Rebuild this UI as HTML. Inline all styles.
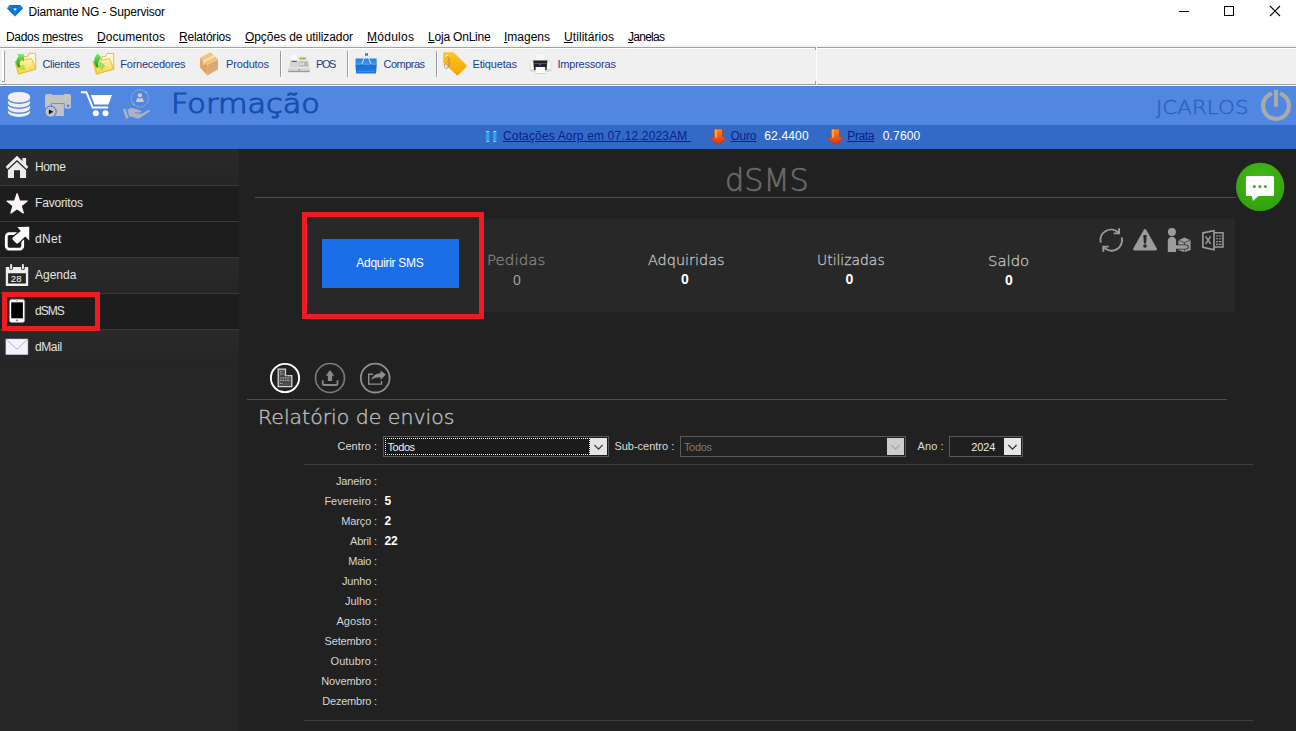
<!DOCTYPE html>
<html lang="pt"><head><meta charset="utf-8"><title>Diamante NG - Supervisor</title>
<style>
*{box-sizing:border-box;margin:0;padding:0}
html,body{width:1296px;height:731px;overflow:hidden;background:#212121;font-family:"Liberation Sans",sans-serif}
body{position:relative}
div,svg{position:absolute}
.t{position:absolute;line-height:1;white-space:nowrap}
u{text-decoration:underline}
.hl{height:1px;background:#4e4e4e}
</style></head><body>
<!-- window chrome -->
<div style="left:0;top:0;width:1296px;height:47px;background:#fff"></div>
<div style="left:0;top:45px;width:1296px;height:2px;background:#f6f6f6"></div>
<div style="left:0;top:47px;width:1296px;height:39px;background:#f0f0f0"></div>
<div style="left:0;top:47px;width:815px;height:1px;background:#a0a0a0"></div>
<div style="left:0;top:48px;width:815px;height:1px;background:#fff"></div>
<div style="left:817px;top:47px;width:479px;height:1px;background:#a0a0a0"></div>
<div style="left:817px;top:48px;width:479px;height:1px;background:#fff"></div>
<div style="left:0;top:84px;width:815px;height:1px;background:#a0a0a0"></div>
<div style="left:817px;top:84px;width:479px;height:1px;background:#a0a0a0"></div>
<div style="left:0;top:85px;width:1296px;height:1px;background:#fff"></div>
<div style="left:815px;top:47px;width:1px;height:3px;background:#a0a0a0"></div>
<div style="left:815px;top:81px;width:1px;height:4px;background:#a0a0a0"></div>
<div style="left:816px;top:47px;width:1px;height:38px;background:#fff"></div>
<!-- toolbar grip + separators -->
<div style="left:2px;top:51px;width:2px;height:30px;background:#fff"></div>
<div style="left:4px;top:51px;width:1px;height:31px;background:#a0a0a0"></div>
<div style="left:2px;top:81px;width:3px;height:1px;background:#a0a0a0"></div>
<div style="left:280px;top:51px;width:1px;height:26px;background:#a0a0a0"></div>
<div style="left:281px;top:51px;width:1px;height:26px;background:#fff"></div>
<div style="left:347px;top:51px;width:1px;height:26px;background:#a0a0a0"></div>
<div style="left:348px;top:51px;width:1px;height:26px;background:#fff"></div>
<div style="left:436px;top:51px;width:1px;height:26px;background:#a0a0a0"></div>
<div style="left:437px;top:51px;width:1px;height:26px;background:#fff"></div>
<!-- blue header -->
<div style="left:0;top:86px;width:1296px;height:39px;background:#5186e1"></div>
<div style="left:0;top:125px;width:1296px;height:24px;background:#346ac7"></div>
<!-- sidebar -->
<div style="left:0;top:149px;width:239px;height:582px;background:#262626"></div>
<div style="left:0;top:149px;width:239px;height:36px;background:linear-gradient(#2a2a2a,#252525)"></div>
<div style="left:0;top:186px;width:239px;height:71px;background:#1d1d1d"></div>
<div style="left:0;top:258px;width:239px;height:35px;background:linear-gradient(#2a2a2a,#252525)"></div>
<div style="left:0;top:294px;width:239px;height:35px;background:#1d1d1d"></div>
<div style="left:0;top:330px;width:239px;height:36px;background:linear-gradient(#2a2a2a,#252525)"></div>
<div style="left:0;top:185px;width:239px;height:1px;background:#3a3a3a"></div>
<div style="left:0;top:221px;width:239px;height:1px;background:#3a3a3a"></div>
<div style="left:0;top:257px;width:239px;height:1px;background:#3a3a3a"></div>
<div style="left:0;top:293px;width:239px;height:1px;background:#3a3a3a"></div>
<div style="left:0;top:329px;width:239px;height:1px;background:#3a3a3a"></div>
<!-- red highlight sidebar -->
<div style="left:2px;top:292px;width:98px;height:39px;border:5px solid #ed1c24"></div>
<!-- main -->
<div class="hl" style="left:255px;top:197px;width:981px"></div>
<div style="left:304px;top:219px;width:931px;height:93px;background:#282828"></div>
<div style="left:302px;top:212px;width:182px;height:107px;border:5px solid #ed1c24;background:#282828"></div>
<div style="left:322px;top:239px;width:137px;height:49px;background:#1a6fe8"></div>
<div class="hl" style="left:247px;top:399px;width:980px"></div>
<div style="left:304px;top:464px;width:949px;height:1px;background:#3e3e3e"></div>
<div style="left:304px;top:720px;width:949px;height:1px;background:#3e3e3e"></div>
<!-- combos -->
<div style="left:383px;top:436px;width:226px;height:21px;border:1px solid #5a5a5a;background:#1b1b1b"></div>
<div style="left:385px;top:438px;width:205px;height:17px;border:1px dotted #fff"></div>
<div style="left:590px;top:438px;width:17px;height:17px;background:#e4e4e4"></div>
<div style="left:680px;top:436px;width:226px;height:21px;border:1px solid #5a5a5a"></div>
<div style="left:887px;top:438px;width:17px;height:17px;background:#cccccc"></div>
<div style="left:949px;top:436px;width:74px;height:21px;border:1px solid #5a5a5a;background:#1f1f1f"></div>
<div style="left:1004px;top:438px;width:17px;height:17px;background:#e6e6e6"></div>
<svg width="1296" height="731" viewBox="0 0 1296 731" style="left:0;top:0">
<defs>
<linearGradient id="gFold" x1="0" y1="0" x2="0" y2="1"><stop offset="0" stop-color="#fff6b8"/><stop offset="1" stop-color="#fdd12c"/></linearGradient>
<linearGradient id="gFoldB" x1="0" y1="0" x2="0" y2="1"><stop offset="0" stop-color="#fffce0"/><stop offset="1" stop-color="#fdeb9a"/></linearGradient>
<linearGradient id="gGreen" x1="0" y1="0" x2="0" y2="1"><stop offset="0" stop-color="#7df06a"/><stop offset="1" stop-color="#0e9a1a"/></linearGradient>
<linearGradient id="gTag" x1="0" y1="0" x2="0" y2="1"><stop offset="0" stop-color="#fdc423"/><stop offset="1" stop-color="#f4a400"/></linearGradient>
<linearGradient id="gBask" x1="0" y1="0" x2="0" y2="1"><stop offset="0" stop-color="#1f7fe6"/><stop offset="0.4" stop-color="#3d9cf2"/><stop offset="0.45" stop-color="#1a6fd6"/><stop offset="1" stop-color="#1e7ae2"/></linearGradient>
<linearGradient id="gArr" x1="0" y1="0" x2="0" y2="1"><stop offset="0" stop-color="#ff8a1e"/><stop offset="1" stop-color="#e02a08"/></linearGradient>
<radialGradient id="gChat" cx="0.5" cy="0.35" r="0.7"><stop offset="0" stop-color="#43bc16"/><stop offset="1" stop-color="#319e0f"/></radialGradient>
<linearGradient id="gPos" x1="0" y1="0" x2="0" y2="1"><stop offset="0" stop-color="#e8e8e8"/><stop offset="1" stop-color="#bdbdbd"/></linearGradient>
</defs>
<!-- app diamond -->
<g>
<polygon points="9.8,5 20.2,5 23,8.6 15,16.4 7,8.6" fill="#0b6fce"/>
<polygon points="9.8,5 12.5,8.6 7,8.6" fill="#1088e0"/>
<polygon points="20.2,5 23,8.6 17.5,8.6" fill="#1088e0"/>
<polygon points="12.5,8.6 17.5,8.6 15,16.4" fill="#0d84dc"/>
<polygon points="13.6,8.4 16.6,8.4 15.8,10.2 14.4,10.2" fill="#fff"/>
</g>
<!-- folder template -->
<g>
<path d="M24.2 56.6 L27.6 56.6 L29 53.4 L35.6 53.4 L35.8 69 L20 73 Z" fill="url(#gFoldB)" stroke="#d9a94a" stroke-width="0.8"/>
<path d="M18.8 61 L31.5 58.6 L35.6 69.2 L18.4 74.2 L15 61.5 Z" fill="url(#gFold)" stroke="#e0ac3a" stroke-width="0.8"/>
<path d="M18.8 61 L18.4 74.2 L15 61.5 Z" fill="#f3c030"/>
</g>
<path d="M18.6 67.6 C15.4 64 15.6 59 18.8 56.4 L17 54 L24 54.2 L24 61.6 L21.8 59.2 C19.6 61 19 64.4 20.4 67.2 Z" fill="url(#gGreen)"/>
<path d="M20.4 65 L24 65 L26 69.5 L20 70 Z" fill="#9fdc55" opacity="0.75"/>
<g transform="translate(78 0)">
<path d="M24.2 56.6 L27.6 56.6 L29 53.4 L35.6 53.4 L35.8 69 L20 73 Z" fill="url(#gFoldB)" stroke="#d9a94a" stroke-width="0.8"/>
<path d="M18.8 61 L31.5 58.6 L35.6 69.2 L18.4 74.2 L15 61.5 Z" fill="url(#gFold)" stroke="#e0ac3a" stroke-width="0.8"/>
<path d="M18.8 61 L18.4 74.2 L15 61.5 Z" fill="#f3c030"/>
</g>
<path d="M96.8 67.6 C93.2 64 93.4 57.4 97.6 53.6 C99.6 54.8 100.6 56.4 101 58.2 C98.4 59.6 97.6 63.6 98.6 67.4 Z" fill="url(#gGreen)"/>
<path d="M99.5 61 L105.5 65.4 L101.5 71 L100.8 68 L98.6 68.6 L98.6 62.8 Z" fill="#8fd855" opacity="0.8"/>
<!-- box -->
<polygon points="210.4,52.2 218,59.6 207.1,65.1 200.1,57.8" fill="#f3c474"/>
<polygon points="200.1,57.8 207.1,65.1 207.3,75.4 200.1,67.5" fill="#e2a35c"/>
<polygon points="207.1,65.1 218,59.6 218,69.4 207.3,75.4" fill="#d9ab74"/>
<polygon points="213.5,55.2 215,56.7 204.4,62.3 204.4,65.6 203,64.2 203,60.8" fill="#f4e0c4"/>
<!-- POS -->
<rect x="288" y="67.4" width="22" height="4.6" rx="1" fill="url(#gPos)"/>
<rect x="288.4" y="71" width="21.2" height="1.2" fill="#9a9a9a"/>
<path d="M290.4 61 L308.4 61 L309.4 67.4 L289.2 67.4 Z" fill="#d4d4d4"/>
<path d="M297.5 56.6 L307.2 56.6 L308.4 61 L297.5 61 Z" fill="#e9e9e9"/>
<rect x="299.2" y="57.4" width="6.8" height="2" rx="0.8" fill="#8fc62a"/>
<rect x="299.5" y="61.6" width="8.4" height="4.6" fill="#b5b5b5"/>
<rect x="300.2" y="62.6" width="1.6" height="2.6" fill="#e8e8e8"/><rect x="302.6" y="62.6" width="1.6" height="2.6" fill="#e8e8e8"/>
<circle cx="294" cy="57.8" r="2.8" fill="#fdfdfd"/>
<rect x="291.6" y="60.8" width="5.2" height="1" fill="#444"/>
<rect x="298.4" y="69.2" width="1.6" height="1.2" fill="#8a8a8a"/>
<!-- basket -->
<path d="M355.6 58.4 L376.6 58.4 L376.8 65 L376 73.6 L356.2 73.6 L355.4 65 Z" fill="url(#gBask)"/>
<rect x="357.6" y="70.8" width="17" height="1" fill="#3f97ee"/>
<path d="M361.6 64.4 L366 54 L367.2 54 L371 64.4" fill="none" stroke="#e8e8ee" stroke-width="0.9"/>
<rect x="365" y="53.2" width="3" height="2.6" fill="#2d82e2"/>
<circle cx="361.6" cy="64.5" r="0.7" fill="#8a5a5a"/><circle cx="370.9" cy="64.5" r="0.7" fill="#8a5a5a"/>
<!-- tag -->
<path d="M443.4 52.2 L453.6 52.2 L466.6 65.2 Q467.3 66 466.6 66.8 L458.2 75 Q457.4 75.6 456.6 75 L443.2 62.6 Z" fill="url(#gTag)"/>
<circle cx="446.8" cy="55.8" r="1.2" fill="#f4f4f4"/>
<path d="M446.8 55.8 C450 58 450.2 66 447.2 68.2 C445 69 444 66.4 444.4 64" fill="none" stroke="#8d8d80" stroke-width="0.9"/>
<!-- printer -->
<rect x="535.2" y="53.8" width="9.8" height="7" fill="#f7f7f7" stroke="#e2e2e2" stroke-width="0.4"/>
<ellipse cx="540.5" cy="70.6" rx="11.5" ry="1.6" fill="#d4d4d4"/><path d="M530.6 62.5 Q530.6 60.8 533 60.8 L548 60.8 Q550.6 60.8 550.8 62.5 L551 69.6 L530.2 69.6 Z" fill="#fbfbfb" stroke="#cfcfcf" stroke-width="0.6"/>
<path d="M533.2 60.6 L547.4 60.6 L546.6 70 L534 70 Z" fill="#232323"/>
<rect x="533.4" y="63.2" width="14" height="0.6" fill="#777"/>
<rect x="539" y="64" width="2.2" height="1.2" fill="#4a5ad8"/>
<rect x="535.6" y="67" width="9.6" height="6.4" fill="#fdfdfd"/>
<rect x="535" y="73" width="10.6" height="0.8" fill="#c8c8c8"/>

<!-- header icons -->
<g fill="#efefef">
<path d="M7.9 96.8 L7.9 112 A11.1 4.9 0 0 0 30.1 112 L30.1 96.8 Z"/>
</g>
<g fill="none" stroke="#5186e1" stroke-width="1.3">
<path d="M7.6 98.6 A11.3 4.6 0 0 0 30.4 98.6"/>
<path d="M7.6 103.6 A11.3 4.6 0 0 0 30.4 103.6"/>
<path d="M7.6 108.6 A11.3 4.6 0 0 0 30.4 108.6"/>
</g>
<ellipse cx="19" cy="96.8" rx="11.1" ry="4.9" fill="#f0f0f0"/>
<!-- printer-play -->
<path d="M47 94 L51.4 94 Q52.4 94 52.4 95 L63.4 95 Q63.4 94 64.4 94 L69 94 Q71 94 71 96 L71 107 Q71 108.6 69.4 108.6 L46.6 108.6 Q45 108.6 45 107 L45 96 Q45 94 47 94 Z" fill="#c3c3c3"/>
<rect x="51.2" y="103.2" width="13.4" height="6" fill="#5186e1"/>
<rect x="52" y="104" width="11.9" height="12" fill="#c3c3c3"/>
<rect x="66.9" y="104.5" width="2.5" height="2.5" rx="0.6" fill="#5186e1"/>
<circle cx="50.6" cy="111.8" r="6.2" fill="#5186e1"/>
<circle cx="50.6" cy="111.8" r="5" fill="#c3c3c3"/>
<path d="M48.9 109.4 L53.4 111.8 L48.9 114.2 Z" fill="#111"/>
<!-- cart -->
<path d="M80.9 92.2 L86.4 92.2 L92.7 107.6 L108.1 107.6" fill="none" stroke="#fff" stroke-width="2" stroke-linejoin="miter"/>
<path d="M90.8 95.1 L112.1 95.1 L108.4 104.5 L94.5 104.5 Z" fill="#fff"/>
<circle cx="95.8" cy="113.2" r="3" fill="#fff"/><circle cx="105.5" cy="113.2" r="3" fill="#fff"/>
<!-- hand + user -->
<circle cx="139.9" cy="98.3" r="8.7" fill="none" stroke="#a9b3cc" stroke-width="0.8" opacity="0.8"/>
<circle cx="146" cy="92.6" r="1" fill="#a9b3cc"/><circle cx="133.8" cy="104.2" r="1" fill="#a9b3cc"/>
<circle cx="139.9" cy="95.3" r="2.1" fill="#d3cdc6"/>
<path d="M136 102 L137 98.6 Q137.3 97.8 138.2 98 L139.9 98.8 L141.6 98 Q142.5 97.8 142.8 98.6 L143.8 102 Z" fill="#d3cdc6"/>
<path d="M122.9 109.1 L125.4 108.5 L128.5 118.1 L126 119 Z" fill="#adb3c2"/>
<path d="M127.2 109.8 Q131 107.4 134 108.4 L140.4 110.6 Q141.6 111.4 140.8 112.4 L134.6 112.6 L134.6 113.2 L141.8 113.8 L148 110.2 Q150 109.6 150.2 111 L139.6 118.2 Q138.4 118.8 137 118.4 L131.4 116.6 L129.6 117 Z" fill="#adb3c2"/>
<!-- power -->
<path d="M1281.5 94.1 A13 13 0 1 1 1270.5 94.1" fill="none" stroke="#aaaaaa" stroke-width="4.2" stroke-linecap="round"/>
<rect x="1273.9" y="89.8" width="4.1" height="17" fill="#aaaaaa"/>
<!-- ticker -->
<rect x="486" y="131" width="3.5" height="11" fill="#2aa6e0"/><rect x="493" y="131" width="3.5" height="11" fill="#2aa6e0"/>
<rect x="486.6" y="131" width="2.3" height="0.9" fill="#c9ecfa"/><rect x="493.6" y="131" width="2.3" height="0.9" fill="#c9ecfa"/>
<rect x="486.6" y="141" width="2.3" height="0.9" fill="#8fd8f5"/><rect x="493.6" y="141" width="2.3" height="0.9" fill="#8fd8f5"/>
<g><path d="M714.2 129 L722.4 129 L722.4 136.2 L725.8 138.4 L719.1 144.9 L710.1 138.4 L714.2 137.6 Z" fill="url(#gArr)" stroke="#b03010" stroke-width="0.5"/>
<path d="M714.8 129.6 L717 129.6 L717 138 L714.8 137.6 Z" fill="#ffb050" opacity="0.8"/></g>
<g transform="translate(117 0)"><path d="M714.2 129 L722.4 129 L722.4 136.2 L725.8 138.4 L719.1 144.9 L710.1 138.4 L714.2 137.6 Z" fill="url(#gArr)" stroke="#b03010" stroke-width="0.5"/>
<path d="M714.8 129.6 L717 129.6 L717 138 L714.8 137.6 Z" fill="#ffb050" opacity="0.8"/></g>
<!-- sidebar icons -->
<g fill="#ececec">
<path d="M17 155.7 L22.4 160.9 L22.4 157.9 L26.1 157.9 L26.1 164.5 L28.3 166.7 L26.6 168.9 L17 159.9 L7.4 168.9 L5.7 166.7 Z"/>
<path d="M17 161.8 L26.1 170.2 L26.1 178 L20 178 L20 170.2 L14 170.2 L14 178 L7.9 178 L7.9 170.2 Z"/>
</g>
<path d="M17.1 193.6 L19.6 200.9 L27.2 201.1 L21.2 205.8 L23.3 213 L17.1 208.7 L10.9 213 L13 205.8 L7 201.1 L14.6 200.9 Z" fill="#fff6f9" stroke="#fff6f9" stroke-width="1.2" stroke-linejoin="round"/>
<!-- dNet -->
<rect x="6.3" y="233.7" width="16.4" height="15.4" rx="3" fill="none" stroke="#fff" stroke-width="2.8"/>
<path d="M17.4 227 L29.2 226.8 L29.2 240.6 L25.2 236.6 L18.4 243 Q17.2 244 16 243 L12.8 239.8 Q11.8 238.6 12.8 237.4 L20.8 231 Z" fill="#fff" stroke="#1d1d1d" stroke-width="2.4" paint-order="stroke"/>
<!-- agenda -->
<path d="M5.8 267 H28.2 V286.1 H5.8 Z M8.1 273.3 V283.6 H25.9 V273.3 Z" fill="#eeeeee" fill-rule="evenodd"/>
<rect x="9.3" y="263.6" width="3.6" height="6.4" rx="1.6" fill="#262626"/><rect x="21.1" y="263.6" width="3.6" height="6.4" rx="1.6" fill="#262626"/>
<rect x="10.1" y="263.9" width="2" height="5.4" rx="0.9" fill="#e6e6e6"/><rect x="21.9" y="263.9" width="2" height="5.4" rx="0.9" fill="#e6e6e6"/>
<!-- phone -->
<rect x="9.4" y="299.2" width="15.3" height="23.4" rx="2.4" fill="#fff" stroke="#8a8a8a" stroke-width="0.7"/>
<rect x="11.2" y="302.3" width="11.7" height="16" fill="#000"/>
<circle cx="17" cy="320.4" r="0.8" fill="#555"/><rect x="15.8" y="300.5" width="2.4" height="0.6" fill="#777"/>
<!-- mail -->
<rect x="5.9" y="339" width="22" height="15.6" fill="#f4f3fd" stroke="#c9c6e4" stroke-width="0.5"/>
<path d="M6.2 339.4 L17 349.2 L27.6 339.4" fill="none" stroke="#a9a8c6" stroke-width="0.9"/>
<!-- chat bubble -->
<circle cx="1260.2" cy="186.9" r="24.2" fill="url(#gChat)"/>
<path d="M1247.4 176.1 H1272.5 Q1274 176.1 1274 177.6 V194.4 Q1274 195.9 1272.5 195.9 H1258.2 L1253 200.9 L1251.8 195.9 H1247.4 Q1245.9 195.9 1245.9 194.4 V177.6 Q1245.9 176.1 1247.4 176.1 Z" fill="#fff"/>
<circle cx="1254.4" cy="186.6" r="1.5" fill="#3aae14"/><circle cx="1259.9" cy="186.6" r="1.5" fill="#3aae14"/><circle cx="1265.4" cy="186.6" r="1.5" fill="#3aae14"/>
<!-- panel icons -->
<g fill="none" stroke="#9c9c9c" stroke-width="1.9">
<path d="M1100.7 242.6 A10.6 10.6 0 0 1 1118.4 232.6"/>
<path d="M1121.8 237.6 A10.6 10.6 0 0 1 1104 247.6"/>
<path d="M1119.1 228.2 V233.4 H1113.7"/>
<path d="M1103.3 251.8 V246.6 H1108.7"/>
</g>
<path d="M1145 230.2 L1155.8 249.2 L1134.3 249.2 Z" fill="#9c9c9c" stroke="#9c9c9c" stroke-width="2.4" stroke-linejoin="round"/>
<path d="M1143.3 235 H1146.7 L1146.1 243.6 H1143.9 Z" fill="#282828"/><circle cx="1145" cy="246" r="1.8" fill="#282828"/>
<g fill="#9c9c9c">
<circle cx="1171.9" cy="232" r="4"/>
<path d="M1167.8 252 V241 A4.15 4.15 0 0 1 1176.1 241 V252 Z"/>
<path d="M1184.4 237.6 L1190.6 240.2 L1190.6 250 L1184.4 252.2 L1178.4 250 L1178.4 240.2 Z"/>
</g>
<path d="M1178.6 240.3 L1184.4 242.6 L1190.4 240.3 M1184.4 242.6 V252" fill="none" stroke="#282828" stroke-width="0.7"/>
<rect x="1176.5" y="244.4" width="12.2" height="5.2" rx="2.4" fill="#282828"/>
<rect x="1174" y="245.3" width="13.8" height="3.4" rx="1.7" fill="#9c9c9c"/>
<!-- excel -->
<rect x="1213" y="232.8" width="10" height="14.2" fill="none" stroke="#9c9c9c" stroke-width="1.5"/>
<path d="M1216 236 H1221.4 M1216 238.8 H1221.4 M1216 241.6 H1221.4 M1216 244.4 H1221.4" stroke="#9c9c9c" stroke-width="1.1"/>
<path d="M1218.6 234 V246" stroke="#282828" stroke-width="0.8"/>
<path d="M1202.9 232.9 L1214 230.7 V249.7 L1202.9 247.3 Z" fill="#282828" stroke="#9c9c9c" stroke-width="1.6" stroke-linejoin="miter"/>
<path d="M1205.6 236.4 L1210.6 243.8 M1210.6 236.4 L1205.6 243.8" stroke="#9c9c9c" stroke-width="1.5"/>
<!-- round icons -->
<circle cx="285" cy="378" r="14.1" fill="none" stroke="#fff" stroke-width="1.9"/>
<path d="M278.2 369.1 H285.5 V375.7 H291.8 V386.6 H278.2 Z" fill="#505050" stroke="#d2d2d2" stroke-width="1.3"/>
<path d="M280 371.6 H282.6 M280 374 H283.4 M280 378 H290 M280 380.4 H290 M280 383.4 H282.8" stroke="#b4b4b4" stroke-width="1" stroke-dasharray="1.6 0.8"/>
<path d="M280 376.2 H289.6 M280 382 H289.6" stroke="#3a3a3a" stroke-width="0.9" stroke-dasharray="2 1"/>
<circle cx="330" cy="378" r="14.5" fill="none" stroke="#7a7a7a" stroke-width="1.7"/>
<path d="M330 370 L334.2 375.7 H332.1 V381 H327.9 V375.7 H325.8 Z" fill="#8a8a8a"/>
<path d="M322.7 380.2 V383.4 Q322.7 385 324.3 385 H335.9 Q337.5 385 337.5 383.4 V380.2" fill="none" stroke="#8a8a8a" stroke-width="1.8"/>
<circle cx="375.2" cy="378.1" r="14.4" fill="none" stroke="#8e8e8e" stroke-width="1.8"/>
<path d="M373 374.3 H368.7 V384.1 H381.5 V381" fill="none" stroke="#8e8e8e" stroke-width="1.4"/>
<path d="M371 380 Q373.4 373.4 380.6 373.2 V370.4 L385.8 374.6 L380.6 380 V377.4 Q375 376.8 371 380 Z" fill="#8e8e8e"/>
<!-- chevrons -->
<path d="M594.4 445 L598.5 449.2 L602.6 445" fill="none" stroke="#404040" stroke-width="1.2"/>
<path d="M891.4 445 L895.5 449.2 L899.6 445" fill="none" stroke="#a8a8a8" stroke-width="1.2"/>
<path d="M1008.4 445 L1012.5 449.2 L1016.6 445" fill="none" stroke="#303030" stroke-width="1.2"/>
<!-- window controls -->
<path d="M1179 11.5 H1189" stroke="#000" stroke-width="1"/>
<rect x="1224.5" y="6.5" width="9" height="9" fill="none" stroke="#000" stroke-width="1"/>
<path d="M1270 6 L1280 16 M1280 6 L1270 16" stroke="#000" stroke-width="1.1"/>
</svg>

<span class="t" style='left:28.5px;top:5.8px;font-size:12px;color:#000;letter-spacing:-0.18px;'>Diamante NG - Supervisor</span>
<span class="t" style='left:6.0px;top:30.8px;font-size:12px;color:#000;letter-spacing:-0.31px;'>Dados <u>m</u>estres</span>
<span class="t" style='left:97.0px;top:30.8px;font-size:12px;color:#000;letter-spacing:0.07px;'><u>D</u>ocumentos</span>
<span class="t" style='left:179.0px;top:30.8px;font-size:12px;color:#000;letter-spacing:-0.22px;'><u>R</u>elatórios</span>
<span class="t" style='left:245.0px;top:30.8px;font-size:12px;color:#000;letter-spacing:-0.07px;'><u>O</u>pções de utilizador</span>
<span class="t" style='left:367.0px;top:30.8px;font-size:12px;color:#000;letter-spacing:0.27px;'><u>M</u>ódulos</span>
<span class="t" style='left:428.0px;top:30.8px;font-size:12px;color:#000;letter-spacing:-0.2px;'><u>L</u>oja OnLine</span>
<span class="t" style='left:504.0px;top:30.8px;font-size:12px;color:#000;'><u>I</u>magens</span>
<span class="t" style='left:564.0px;top:30.8px;font-size:12px;color:#000;letter-spacing:0.07px;'><u>U</u>tilitários</span>
<span class="t" style='left:628.0px;top:30.8px;font-size:12px;color:#000;letter-spacing:-0.73px;'><u>J</u>anelas</span>
<span class="t" style='left:42.5px;top:58.7px;font-size:11px;color:#1e3c8a;letter-spacing:-0.32px;'>Clientes</span>
<span class="t" style='left:120.3px;top:58.7px;font-size:11px;color:#1e3c8a;letter-spacing:-0.24px;'>Fornecedores</span>
<span class="t" style='left:226.0px;top:58.7px;font-size:11px;color:#1e3c8a;letter-spacing:-0.15px;'>Produtos</span>
<span class="t" style='left:316.0px;top:58.7px;font-size:11px;color:#1e3c8a;letter-spacing:-1.45px;'>POS</span>
<span class="t" style='left:383.5px;top:58.7px;font-size:11px;color:#1e3c8a;letter-spacing:-0.52px;'>Compras</span>
<span class="t" style='left:472.5px;top:58.7px;font-size:11px;color:#1e3c8a;letter-spacing:-0.17px;'>Etiquetas</span>
<span class="t" style='left:557.4px;top:58.7px;font-size:11px;color:#1e3c8a;letter-spacing:-0.2px;'>Impressoras</span>
<span class="t" style='left:170.8px;top:91.4px;font-size:26.5px;color:#154eb0;font-family:"DejaVu Sans","Liberation Sans",sans-serif;font-weight:200;transform-origin:0 0;transform:scaleX(1.145);-webkit-text-stroke:1.01px #154eb0;'>Formação</span>
<span class="t" style='left:1156.0px;top:97.8px;font-size:19.5px;color:#2a62c4;font-family:"DejaVu Sans","Liberation Sans",sans-serif;font-weight:200;transform-origin:0 0;transform:scaleX(1.099);-webkit-text-stroke:0.39px #2a62c4;'>JCARLOS</span>
<span class="t" style='left:503.0px;top:129.8px;font-size:12px;color:#0a1e8c;letter-spacing:0.15px;text-decoration:underline;'>Cotações Aorp em 07.12.2023AM&nbsp;</span>
<span class="t" style='left:730.5px;top:129.8px;font-size:12px;color:#0a1e8c;letter-spacing:-0.23px;text-decoration:underline;'>Ouro</span>
<span class="t" style='left:764.2px;top:129.8px;font-size:12px;color:#fff;letter-spacing:0.18px;'>62.4400</span>
<span class="t" style='left:847.3px;top:129.8px;font-size:12px;color:#0a1e8c;letter-spacing:-0.38px;text-decoration:underline;'>Prata</span>
<span class="t" style='left:882.8px;top:129.8px;font-size:12px;color:#fff;letter-spacing:0.15px;'>0.7600</span>
<span class="t" style='left:35.0px;top:160.8px;font-size:12px;color:#e4e4e4;letter-spacing:-0.38px;'>Home</span>
<span class="t" style='left:35.0px;top:196.8px;font-size:12px;color:#e4e4e4;letter-spacing:-0.17px;'>Favoritos</span>
<span class="t" style='left:35.0px;top:232.8px;font-size:12px;color:#e4e4e4;letter-spacing:0.33px;'>dNet</span>
<span class="t" style='left:35.0px;top:268.8px;font-size:12px;color:#e4e4e4;'>Agenda</span>
<span class="t" style='left:35.0px;top:304.8px;font-size:12px;color:#e4e4e4;letter-spacing:-0.99px;'>dSMS</span>
<span class="t" style='left:35.0px;top:340.8px;font-size:12px;color:#e4e4e4;letter-spacing:-0.4px;'>dMail</span>
<span class="t" style='left:10.8px;top:274.2px;font-size:9.5px;color:#fff;letter-spacing:0.12px;'>28</span>
<span class="t" style='left:725.3px;top:163.9px;font-size:32px;color:#6a6a6a;font-family:"DejaVu Sans","Liberation Sans",sans-serif;font-weight:200;transform-origin:0 0;transform:scaleX(0.947);-webkit-text-stroke:0.64px #6a6a6a;'>dSMS</span>
<span class="t" style='left:356.3px;top:256.5px;font-size:12px;color:#fff;letter-spacing:-0.29px;'>Adquirir SMS</span>
<span class="t" style='left:487.2px;top:252.5px;font-size:14.2px;color:#858585;font-family:"DejaVu Sans","Liberation Sans",sans-serif;font-weight:200;transform-origin:0 0;transform:scaleX(1.065);-webkit-text-stroke:0.28px #858585;'>Pedidas</span>
<span class="t" style='left:513.0px;top:272.9px;font-size:14px;color:#a0a0a0;'>0</span>
<span class="t" style='left:647.7px;top:252.5px;font-size:14.2px;color:#c4c4c4;font-family:"DejaVu Sans","Liberation Sans",sans-serif;font-weight:200;transform-origin:0 0;transform:scaleX(1.016);-webkit-text-stroke:0.28px #c4c4c4;'>Adquiridas</span>
<span class="t" style='left:681.0px;top:272.1px;font-size:14px;color:#fff;font-weight:700;'>0</span>
<span class="t" style='left:816.5px;top:252.5px;font-size:14.2px;color:#c4c4c4;font-family:"DejaVu Sans","Liberation Sans",sans-serif;font-weight:200;transform-origin:0 0;transform:scaleX(0.980);-webkit-text-stroke:0.28px #c4c4c4;'>Utilizadas</span>
<span class="t" style='left:845.6px;top:272.1px;font-size:14px;color:#fff;font-weight:700;'>0</span>
<span class="t" style='left:988.1px;top:253.6px;font-size:14.2px;color:#c4c4c4;font-family:"DejaVu Sans","Liberation Sans",sans-serif;font-weight:200;transform-origin:0 0;transform:scaleX(1.047);-webkit-text-stroke:0.28px #c4c4c4;'>Saldo</span>
<span class="t" style='left:1005.0px;top:273.1px;font-size:14px;color:#fff;font-weight:700;'>0</span>
<span class="t" style='left:257.8px;top:407.8px;font-size:19px;color:#bdbdbd;font-family:"DejaVu Sans","Liberation Sans",sans-serif;font-weight:200;transform-origin:0 0;transform:scaleX(1.077);-webkit-text-stroke:0.38px #bdbdbd;'>Relatório de envios</span>
<span class="t" style='left:337.4px;top:440.7px;font-size:11px;color:#dcdcdc;letter-spacing:0.08px;'>Centro :</span>
<span class="t" style='left:387.4px;top:441.7px;font-size:11px;color:#f0f0f0;letter-spacing:-0.41px;'>Todos</span>
<span class="t" style='left:614.4px;top:440.7px;font-size:11px;color:#dcdcdc;letter-spacing:-0.01px;'>Sub-centro :</span>
<span class="t" style='left:683.9px;top:441.7px;font-size:11px;color:#7a7a7a;letter-spacing:-0.29px;'>Todos</span>
<span class="t" style='left:917.5px;top:440.7px;font-size:11px;color:#dcdcdc;letter-spacing:0.09px;'>Ano :</span>
<span class="t" style='left:971.2px;top:441.7px;font-size:11px;color:#e8e8e8;letter-spacing:-0.08px;'>2024</span>
<span class="t" style='left:336.0px;top:475.7px;font-size:11px;color:#d6d6d6;letter-spacing:-0.14px;'>Janeiro :</span>
<span class="t" style='left:324.4px;top:495.7px;font-size:11px;color:#d6d6d6;letter-spacing:0.01px;'>Fevereiro :</span>
<span class="t" style='left:341.3px;top:515.7px;font-size:11px;color:#d6d6d6;letter-spacing:-0.15px;'>Março :</span>
<span class="t" style='left:350.0px;top:535.7px;font-size:11px;color:#d6d6d6;letter-spacing:-0.18px;'>Abril :</span>
<span class="t" style='left:348.3px;top:555.7px;font-size:11px;color:#d6d6d6;letter-spacing:-0.24px;'>Maio :</span>
<span class="t" style='left:342.0px;top:575.7px;font-size:11px;color:#d6d6d6;letter-spacing:-0.17px;'>Junho :</span>
<span class="t" style='left:345.0px;top:595.7px;font-size:11px;color:#d6d6d6;letter-spacing:-0.06px;'>Julho :</span>
<span class="t" style='left:336.5px;top:615.7px;font-size:11px;color:#d6d6d6;letter-spacing:0.03px;'>Agosto :</span>
<span class="t" style='left:324.5px;top:635.7px;font-size:11px;color:#d6d6d6;letter-spacing:-0.14px;'>Setembro :</span>
<span class="t" style='left:330.5px;top:655.7px;font-size:11px;color:#d6d6d6;letter-spacing:0.09px;'>Outubro :</span>
<span class="t" style='left:321.3px;top:675.7px;font-size:11px;color:#d6d6d6;letter-spacing:-0.12px;'>Novembro :</span>
<span class="t" style='left:322.3px;top:695.7px;font-size:11px;color:#d6d6d6;letter-spacing:-0.23px;'>Dezembro :</span>
<span class="t" style='left:384.4px;top:494.8px;font-size:12px;color:#fff;font-weight:700;'>5</span>
<span class="t" style='left:384.4px;top:514.8px;font-size:12px;color:#fff;font-weight:700;'>2</span>
<span class="t" style='left:384.4px;top:534.8px;font-size:12px;color:#fff;font-weight:700;letter-spacing:-0.07px;'>22</span>
</body></html>
